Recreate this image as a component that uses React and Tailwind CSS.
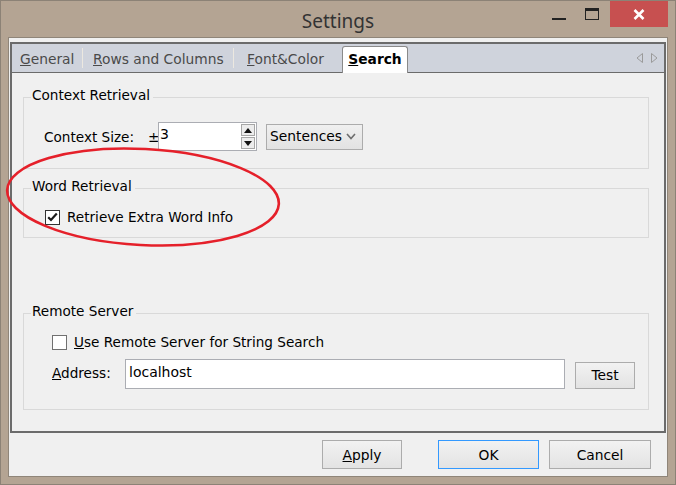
import React from 'react';

const font = { fontFamily: '"DejaVu Sans", Verdana, sans-serif' };

function Group({ title, className, children }) {
  return (
    <div className={`relative border border-[#d9d9d9] ${className}`}>
      <span className="absolute -top-[11px] left-[7px] bg-[#f0f0f0] pl-[1px] pr-[3px] leading-[16px] text-[13.6px] text-black">
        {title}
      </span>
      {children}
    </div>
  );
}

function Check({ checked }) {
  return (
    <div className={`w-[15px] h-[15px] bg-white border flex items-center justify-center ${checked ? 'border-[#333]' : 'border-[#707070]'}`}>
      {checked && (
        <svg width="11" height="10" viewBox="0 0 11 10">
          <path d="M1.2 5.2 L4 8 L9.8 1.5" fill="none" stroke="#1a1a1a" strokeWidth="2.2" />
        </svg>
      )}
    </div>
  );
}

function Btn({ children, className = '' }) {
  return (
    <div className={`flex items-center justify-center border bg-gradient-to-b from-[#f2f2f2] to-[#e3e3e3] text-[13.8px] text-black ${className}`}>
      {children}
    </div>
  );
}

export default function App() {
  return (
    <div className="w-[676px] h-[485px] bg-[#b4a493] border border-[#8c8276] flex flex-col" style={font}>
      {/* title bar */}
      <div className="h-[36px] grid grid-cols-[1fr_auto_1fr] items-start">
        <div />
        <div className="pt-[6px] text-[19px] text-[#333]" style={{ fontFamily: '"Noto Sans", "Open Sans", sans-serif' }}>Settings</div>
        <div className="flex justify-end items-start pr-[7px]">
          <div className="w-[28px] h-[26px] flex items-end justify-center pb-[7px]">
            <div className="w-[14px] h-[2px] bg-[#222]" />
          </div>
          <div className="w-[28px] h-[26px] ml-[5px] flex items-start justify-center pt-[7px]">
            <div className="w-[14px] h-[12px] border border-[#222] border-t-[3px]" />
          </div>
          <div className="w-[58px] h-[26px] ml-[4px] bg-[#c75050] flex items-center justify-center">
            <svg width="12" height="11" viewBox="0 0 12 11">
              <path d="M1.5 1 L10.5 10 M10.5 1 L1.5 10" stroke="#fff" strokeWidth="2.6" />
            </svg>
          </div>
        </div>
      </div>

      {/* client */}
      <div className="mx-[7px] mb-[7px] flex-1 bg-[#f0f0f0] border border-[#8f8579] flex flex-col">
        <div className="mt-[4px] mx-[1px] h-[391px] border-2 border-[#6b6b6b] flex flex-col">
          {/* tab strip */}
          <div className="h-[29px] bg-[#cfd3dc] border-b border-[#6b6b6b] flex items-end text-[13.8px]">
            <div className="w-[70px] pl-[8px] h-[28px] flex items-center pt-[2px] text-[#4a4a4a]">
              <span><span className="underline">G</span>eneral</span>
            </div>
            <div className="w-px h-[20px] bg-[#ece8e0] mb-[4px]" />
            <div className="w-[150px] pl-[10px] h-[28px] flex items-center pt-[2px] text-[#4a4a4a]">
              <span><span className="underline">R</span>ows and Columns</span>
            </div>
            <div className="w-px h-[20px] bg-[#ece8e0] mb-[4px]" />
            <div className="w-[108px] pl-[13px] h-[28px] flex items-center pt-[2px] text-[#4a4a4a]">
              <span><span className="underline">F</span>ont&amp;Color</span>
            </div>
            <div className="w-[66px] h-[27px] -mb-px bg-white border border-b-0 border-[#8a8a8a] rounded-t-[3px] flex items-center justify-center pb-[2px] font-bold text-black">
              <span><span className="underline">S</span>earch</span>
            </div>
            <div className="flex-1" />
            <div className="flex items-center gap-[6px] pr-[6px] h-[28px]">
              <svg width="8" height="10" viewBox="0 0 8 10"><path d="M6.5 0.5 L1 5 L6.5 9.5 Z" fill="none" stroke="#9a9a9a" /></svg>
              <svg width="8" height="10" viewBox="0 0 8 10"><path d="M1.5 0.5 L7 5 L1.5 9.5 Z" fill="none" stroke="#9a9a9a" /></svg>
            </div>
          </div>

          {/* tab content */}
          <div className="flex-1 flex flex-col pl-[11px] pr-[15px] text-[13.6px] text-black">
            <Group title="Context Retrieval" className="mt-[24px] h-[72px]">
              <div className="flex items-center mt-[24px] pl-[20px]">
                <span className="w-[104px] pt-[2px]">Context Size:</span>
                <span className="w-[10px] pt-[2px]">±</span>
                <div className="w-[99px] h-[29px] bg-white border border-[#abadb3] flex">
                  <div className="flex-1 pl-[1px] pt-[3px] leading-[16px] text-[14px]">3</div>
                  <div className="w-[15px] flex flex-col gap-px pt-px pr-px pb-px">
                    <div className="flex-1 bg-[#ececec] border border-[#a6a6a6] flex items-center justify-center">
                      <svg width="8" height="5" viewBox="0 0 8 5"><path d="M0 5 L4 0 L8 5 Z" fill="#111" /></svg>
                    </div>
                    <div className="flex-1 bg-[#ececec] border border-[#a6a6a6] flex items-center justify-center">
                      <svg width="8" height="5" viewBox="0 0 8 5"><path d="M0 0 L8 0 L4 5 Z" fill="#111" /></svg>
                    </div>
                  </div>
                </div>
                <div className="ml-[9px] w-[97px] h-[26px] border border-[#acacac] bg-gradient-to-b from-[#f0f0f0] to-[#e2e2e2] flex items-center pl-[3px] pr-[6px] text-[13.8px]">
                  <span className="flex-1">Sentences</span>
                  <svg width="10" height="7" viewBox="0 0 10 7"><path d="M1 1 L5 5.5 L9 1" fill="none" stroke="#6d6d6d" strokeWidth="1.6" /></svg>
                </div>
              </div>
            </Group>

            <Group title="Word Retrieval" className="mt-[19px] h-[50px]">
              <div className="flex items-center mt-[18px] pl-[21px]">
                <Check checked />
                <span className="ml-[7px]">Retrieve Extra Word Info</span>
              </div>
            </Group>

            <Group title="Remote Server" className="mt-[75px] h-[97px]">
              <div className="flex items-center mt-[18px] pl-[28px]">
                <Check />
                <span className="ml-[7px]"><span className="underline">U</span>se Remote Server for String Search</span>
              </div>
              <div className="flex items-center mt-[7px] pl-[28px]">
                <span className="w-[73px] pb-[3px]"><span className="underline">A</span>ddress:</span>
                <div className="w-[440px] h-[30px] bg-white border border-[#abadb3] flex items-center pl-[3px] pb-[3px] text-[14px]">localhost</div>
                <Btn className="ml-[10px] mt-[2px] w-[60px] h-[27px] border-[#acacac]">Test</Btn>
              </div>
            </Group>
          </div>
        </div>

        {/* buttons */}
        <div className="flex justify-end mt-[7px] pr-[16px]">
          <Btn className="w-[80px] h-[29px] border-[#acacac] pt-[2px]"><span><span className="underline">A</span>pply</span></Btn>
          <Btn className="ml-[36px] w-[101px] h-[29px] border-[#3399ff] pt-[2px]">OK</Btn>
          <Btn className="ml-[10px] w-[102px] h-[29px] border-[#acacac] pt-[2px]">Cancel</Btn>
        </div>
      </div>

      {/* annotation ellipse */}
      <svg className="absolute left-0 top-0 pointer-events-none" width="676" height="485">
        <ellipse cx="143" cy="197" rx="136" ry="48" transform="rotate(3 143 197)" fill="none" stroke="#e5202a" strokeWidth="2.6" />
      </svg>
    </div>
  );
}
